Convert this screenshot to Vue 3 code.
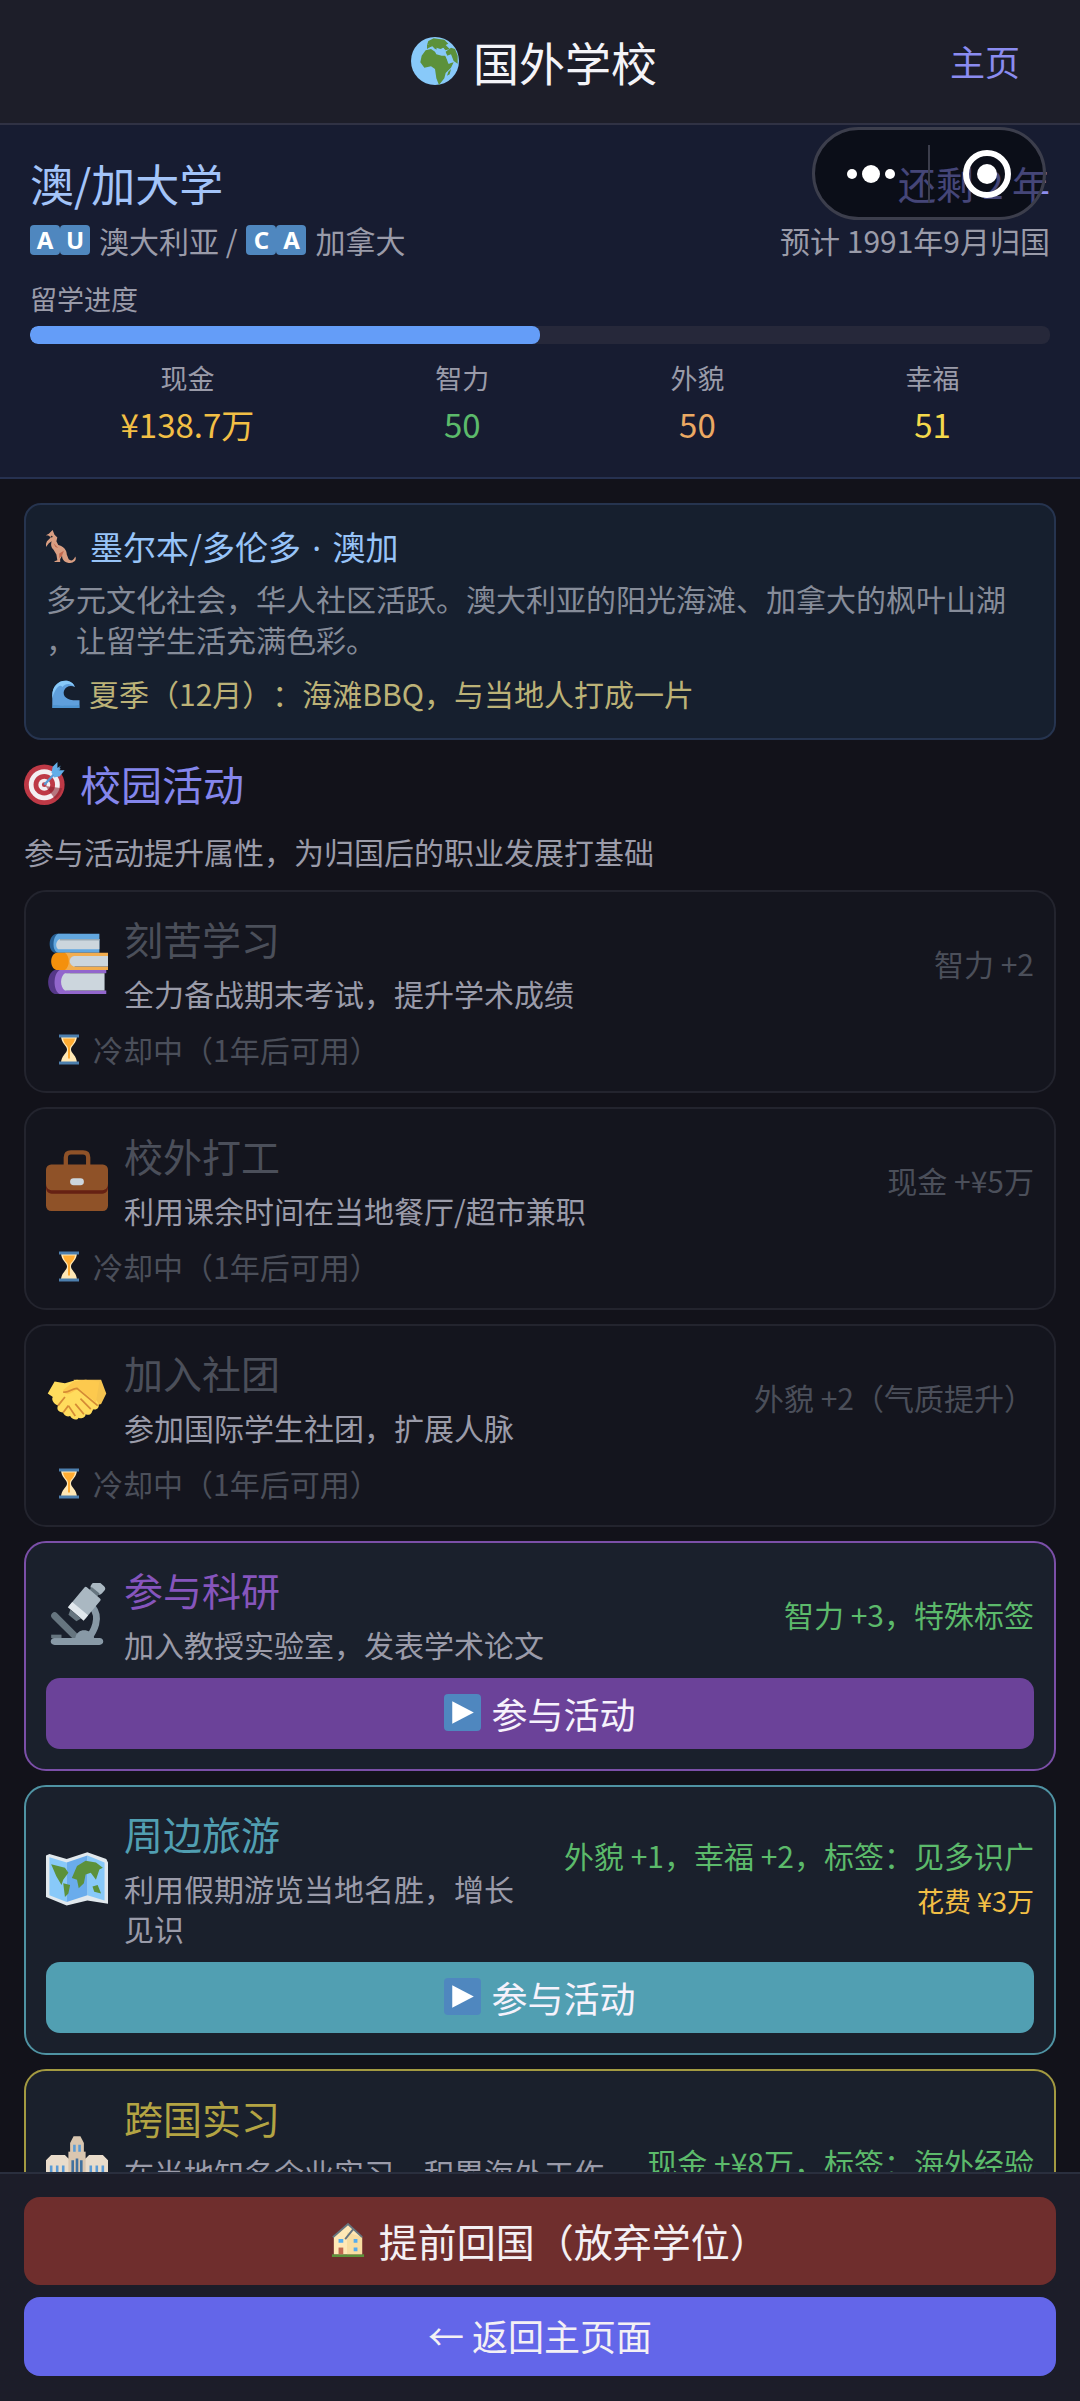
<template>
  <div class="page">
    <!-- 顶部导航 -->
    <header class="nav">
      <h1 class="nav-title">
        <svg class="icon icon-nav" viewBox="0 0 36 36" aria-hidden="true" v-html="icons.globe"></svg>
        国外学校
      </h1>
      <a class="nav-home" href="#">主页</a>
    </header>

    <!-- 小程序胶囊按钮 -->
    <div class="capsule">
      <button class="capsule-btn" type="button" aria-label="更多">
        <svg viewBox="0 0 54 54" aria-hidden="true">
          <circle cx="8" cy="27" r="5" />
          <circle cx="27" cy="27" r="9" />
          <circle cx="46" cy="27" r="5" />
        </svg>
      </button>
      <span class="capsule-line"></span>
      <button class="capsule-btn" type="button" aria-label="关闭">
        <svg viewBox="0 0 54 54" aria-hidden="true">
          <circle class="ring" cx="27" cy="27" r="21" />
          <circle cx="27" cy="27" r="10" />
        </svg>
      </button>
    </div>

    <!-- 留学状态 -->
    <section class="status">
      <div class="status-top">
        <span class="school-name">澳/加大学</span>
        <span class="remain">还剩 2 年</span>
      </div>
      <div class="status-sub">
        <span class="countries">
          <span class="flag"><i>A</i><i>U</i></span>
          澳大利亚 /
          <span class="flag"><i>C</i><i>A</i></span>
          加拿大
        </span>
        <span>预计 1991年9月归国</span>
      </div>
      <div class="progress-label">留学进度</div>
      <div class="progress-track">
        <div class="progress-fill" :style="{ width: progress + '%' }"></div>
      </div>
      <div class="stats">
        <div v-for="stat in stats" :key="stat.label" class="stat">
          <span class="stat-label">{{ stat.label }}</span>
          <span class="stat-value" :class="stat.type">{{ stat.value }}</span>
        </div>
      </div>
    </section>

    <main class="content">
      <!-- 地区介绍 -->
      <section class="region">
        <h2 class="region-title">
          <svg class="icon icon-region" viewBox="0 0 36 36" aria-hidden="true" v-html="icons.kangaroo"></svg>
          <span>墨尔本/多伦多 <span class="dot">·</span> 澳加</span>
        </h2>
        <p class="region-desc">多元文化社会，华人社区活跃。澳大利亚的阳光海滩、加拿大的枫叶山湖，让留学生活充满色彩。</p>
        <p class="region-season">
          <svg class="icon icon-season" viewBox="0 0 36 36" aria-hidden="true" v-html="icons.wave"></svg>
          夏季（12月）：海滩BBQ，与当地人打成一片
        </p>
      </section>

      <!-- 校园活动 -->
      <h2 class="section-title">
        <svg class="icon icon-section" viewBox="0 0 36 36" aria-hidden="true" v-html="icons.target"></svg>
        校园活动
      </h2>
      <p class="section-desc">参与活动提升属性，为归国后的职业发展打基础</p>

      <div class="activities">
        <article
          v-for="item in activities"
          :key="item.name"
          class="activity"
          :class="item.cooling ? 'cooling' : item.theme"
        >
          <div class="activity-head">
            <svg class="icon icon-activity" viewBox="0 0 36 36" aria-hidden="true" v-html="icons[item.icon]"></svg>
            <div class="activity-info">
              <h3 class="activity-name">{{ item.name }}</h3>
              <p class="activity-desc">{{ item.desc }}</p>
            </div>
            <div class="activity-effect">
              <span class="effect">{{ item.effect }}</span>
              <span v-if="item.cost" class="cost">花费 {{ item.cost }}</span>
            </div>
          </div>
          <div v-if="item.cooling" class="cooldown">
            <svg class="icon icon-cooldown" viewBox="0 0 20 30" aria-hidden="true" v-html="icons.hourglass"></svg>
            冷却中（{{ item.cooling }}年后可用）
          </div>
          <button v-else class="join-btn" type="button">
            <svg class="icon icon-play" viewBox="0 0 36 36" aria-hidden="true" v-html="icons.play"></svg>
            参与活动
          </button>
        </article>
      </div>
    </main>

    <!-- 底部操作 -->
    <footer class="footer">
      <button class="footer-btn danger" type="button">
        <svg class="icon icon-house" viewBox="0 0 36 36" aria-hidden="true" v-html="icons.house"></svg>
        <span>提前回国（放弃学位<span class="half">）</span></span>
      </button>
      <button class="footer-btn primary" type="button">← 返回主页面</button>
    </footer>
  </div>
</template>

<script setup>
const progress = 50

const stats = [
  { label: '现金', value: '¥138.7万', type: 'cash' },
  { label: '智力', value: 50, type: 'intel' },
  { label: '外貌', value: 50, type: 'looks' },
  { label: '幸福', value: 51, type: 'happy' }
]

const activities = [
  { name: '刻苦学习', desc: '全力备战期末考试，提升学术成绩', effect: '智力 +2', icon: 'books', cooling: 1 },
  { name: '校外打工', desc: '利用课余时间在当地餐厅/超市兼职', effect: '现金 +¥5万', icon: 'briefcase', cooling: 1 },
  { name: '加入社团', desc: '参加国际学生社团，扩展人脉', effect: '外貌 +2（气质提升）', icon: 'handshake', cooling: 1 },
  { name: '参与科研', desc: '加入教授实验室，发表学术论文', effect: '智力 +3，特殊标签', icon: 'microscope', theme: 'purple' },
  { name: '周边旅游', desc: '利用假期游览当地名胜，增长见识', effect: '外貌 +1，幸福 +2，标签：见多识广', cost: '¥3万', icon: 'map', theme: 'teal' },
  { name: '跨国实习', desc: '在当地知名企业实习，积累海外工作经验', effect: '现金 +¥8万，标签：海外经验', icon: 'building', theme: 'gold' }
]

const icons = {
  globe: `
    <circle cx="18" cy="18" r="18" fill="#88c9f9"/>
    <path fill="#5c913b" d="M13 3l4-2 8 1 3 3-2 1 3 3-3 1-2-2-2 2-4-1-2-2-3 1 1-3-2 1zM8 14l3-4 4-1 3 2 1 2 4 1 3 0 2 6 4-1-2 4-4 4-1 4-4 5-2-5-1-7-3-2-5 1-3-4z"/>
    <path fill="#5c913b" d="M26 11l4-3 3 1 2 5v6l-3-2-2-5-3 1zM28 26l2-2-1 4-2 1zM12 6l2-1 1 2-3 2zM18 7l3-1 1 2-3 1z"/>
    <path fill="#88c9f9" d="M19 8l3 1 3-1-1 2-4 1zM25 13l1-1 4 7-1 1z"/>`,
  kangaroo: `
    <path fill="#d99e82" d="M7 0l2 5 3 3-1 4 2 4c5 1 9 5 9 10l2 5c2 2 5 2 7-3 2 4-2 7-7 7-5-1-7-4-7-8l-2 4v3h-6v-1l3-1-1-6-3-5c-3-3-3-6-2-9l-3 2-3 4-1-1 2-5 4-4-2-2-4-1V6l4-2z"/>
    <path fill="#c1694f" d="M8 14l5 5-3-1zM14 25l5-3-2 5-3 3z"/>
    <circle cx="6" cy="7" r="1" fill="#292f33"/>`,
  wave: `
    <path fill="#5f9fdc" d="M1 36V20C1 9 8 1 18 1c6 0 10 3 12 8-5-3-12-1-14 5-2 7 4 13 20 12v10z"/>
    <path fill="#88c9f9" d="M1 20C1 9 8 1 18 1c6 0 10 3 12 8-5-5-12-5-16 0C10 3 3 14 1 24z"/>
    <path fill="#3b88c3" d="M1 33c5-2 9 1 14 0s10 1 21-1v4H1z" opacity=".5"/>`,
  target: `
    <circle cx="17" cy="19" r="17" fill="#be3946"/>
    <circle cx="17" cy="19" r="13" fill="#f3eff2"/>
    <circle cx="17" cy="19" r="9" fill="#be3946"/>
    <circle cx="17" cy="19" r="5" fill="#f3eff2"/>
    <circle cx="17" cy="19" r="2" fill="#be3946"/>
    <path fill="#8e2632" opacity=".6" d="M18 20l8 11c3-2 5-5 6-9z"/>
    <path stroke="#5a9bd5" stroke-width="2" d="M17 19L30 5"/>
    <path fill="#62aee8" d="M25 11l-2-2 1-5 4-4v5l3-2-3 4h6l-4 5-5 1z"/>`,
  books: `
    <path fill="#265f94" d="M6 1h8v11H5C1 11 1 2 6 1z"/>
    <path fill="#62a7df" d="M7 1h24v11H7C3 11 4 2 7 1z"/>
    <path fill="#ccd6dd" d="M8 4h23v6H7C5 8 6 5 8 4z"/>
    <path fill="#99aab5" d="M8 4h23v1H8z"/>
    <path fill="#f4900c" d="M6 12h8v10H6c-4-1-4-9 0-10z"/>
    <path fill="#f2ad4e" d="M11 12h25v2H17c-4 1-4 5 0 6h19v2H11c3-2 3-8 0-10z"/>
    <path fill="#ccd6dd" d="M16 14h20v6H16c-3-1-3-5 0-6z"/>
    <path fill="#553788" d="M5 22h9v14H5c-5-2-5-12 0-14z"/>
    <path fill="#9266cc" d="M8 22h27v2H12c-3 2-3 8 0 10h23v2H8c-4-2-4-12 0-14z"/>
    <path fill="#ccd6dd" d="M11 24h23v10H11c-3-2-3-8 0-10z"/>`,
  briefcase: `
    <path fill="none" stroke="#8f5228" stroke-width="2.5" d="M11.5 10V5c0-2 1-3 3-3h7c2 0 3 1 3 3v5"/>
    <rect y="9" width="36" height="27" rx="3" fill="#8f5228"/>
    <path fill="#662113" d="M0 20c0 3 2 4 4 4h28c2 0 4-1 4-4v2c0 3-2 4-4 4H4c-2 0-4-1-4-4z"/>
    <rect x="14" y="17" width="8" height="4" rx="2" fill="#ccd6dd"/>`,
  handshake: `
    <path fill="#f5c34f" d="M16 8h8l8 0 3 8-3 6-3 1-2 3-5-2z"/>
    <path fill="#ffdc5d" d="M1 16l4-7 6 1 7-2 4 1 8 12c2 3-1 5-3 4 0 3-2 4-4 3 0 2-3 3-4 2-1 2-4 1-5-1-2 1-4-1-4-2-3 0-4-2-3-4-3-1-4-4-3-5z"/>
    <path fill="#fdc94e" d="M10 14l6-5 7-1 8 1-2 12-10-8-5 3c-2 1-4 0-4-2z"/>
    <path fill="none" stroke="#d58b35" d="M10 15c3 1 5-2 8-2l12 10M20 19l6 6M17 22l5 6M13 23l4 6M7 23l4-5M10 27l3-4"/>`,
  microscope: `
    <path fill="none" stroke="#8899a6" stroke-width="4" d="M27 14c5 6 1 14-3 19"/>
    <path stroke="#66757f" stroke-width="4" stroke-linecap="round" d="M5 19l12 12"/>
    <path fill="#8899a6" d="M5 32h12c1-6 9-6 11 0h3c3 0 3 4 0 4H5c-3 0-3-4 0-4z"/>
    <path fill="#66757f" d="M3 30h6v2H3z"/>
    <g transform="rotate(40 21 12)">
      <rect x="18" y="-4" width="8" height="6" rx="2" fill="#aab8c2"/>
      <path fill="#66757f" d="M19 1h6v3h-6z"/>
      <rect x="16" y="3" width="12" height="15" rx="1" fill="#aab8c2"/>
      <path fill="#e1e8ed" d="M16 15h12v4H16z"/>
      <path fill="#66757f" d="M18 19h8l-1 3h-6z"/>
    </g>`,
  map: `
    <path fill="#e1e8ed" d="M0 5l2-1 10 3 12-4 11 4 1 2v24l-12-2-12 3-12-5z"/>
    <path fill="#88c9f9" d="M2 6l10 3v23L2 28zM24 5l10 4v22l-10-3z"/>
    <path fill="#6aacec" d="M12 9l12-4v23l-12 4z"/>
    <path fill="#5c913b" d="M3 10l8 2 2 3-3 4-1 3-3-5zM10 21l4 1-1 5-2 2zM18 11l5-3 6 1 4 3-2 1-2 6-3-4-3 1-1 5-3 3-1-5-3-1zM27 23l3-1 2 5-4-1z"/>`,
  building: `
    <path fill="#d9c6b0" d="M16 3h4l2 4v6h-8V7z"/>
    <path fill="#e9dccb" d="M0 17l3-3h8l2 2h10l2-2h8l3 3v19H0z"/>
    <path fill="#d9c6b0" d="M13 12h10v24H13z"/>
    <path stroke="#5b9bd5" stroke-width="1.5" d="M3 20v16M6.5 20v16M10 20v16M26 20v16M29.500 20v16M33 20v16M16.500 8v4M19.500 8v4"/>
    <path stroke="#41719f" stroke-width="1.500" d="M15.500 17v19M18 16v20M20.500 17v19"/>`,
  hourglass: `
    <path fill="#ffe8b6" d="M2 1h16c0 8-6 10-6 14s6 6 6 14H2c0-8 6-10 6-14S2 9 2 1z"/>
    <path fill="#ffac33" d="M4 4h12c-1 6-5 7-5 10v10H9V14C9 11 5 10 4 4z"/>
    <path fill="#4c7fae" d="M0 0h20v3H0zM0 27h20v3H0z"/>`,
  play: `
    <rect width="36" height="36" rx="4" fill="#4f87bf"/>
    <path fill="#fff" d="M8 7l21 11L8 29z"/>`,
  house: `
    <path fill="#5c913b" d="M1 33h34v3H1z"/>
    <path fill="#ffe8b6" d="M3 14L18 1l15 14v18H3z"/>
    <path fill="#f2d28c" d="M17 10h1l15 5v18H17z" opacity=".5"/>
    <path fill="none" stroke="#66757f" stroke-width="2" d="M2 15L18 1l15 14M24 6l-9 11"/>
    <path fill="#55acee" d="M8 17h5v4H8zM24 17h4v4h-4zM24 26h4v4h-4z"/>
    <path fill="#c1694f" d="M8 26h5v7H8z"/>`
}
</script>

<style>
body {
  background: #12121a;
}
</style>

<style scoped>
.page {
  position: relative;
  display: flex;
  flex-direction: column;
  height: 100vh;
  background: #12121a;
  color: #f4f4f8;
  font-family: "Noto Sans CJK SC", sans-serif;
  font-weight: 400;
  text-spacing-trim: space-all;
}

h1,
h2,
h3,
p {
  margin: 0;
  font-weight: inherit;
}

button {
  border: none;
  font-family: inherit;
  font-weight: inherit;
  cursor: pointer;
}

.icon {
  display: block;
  flex-shrink: 0;
}

/* 顶部导航 */
.nav {
  display: grid;
  grid-template-columns: 1fr auto 1fr;
  align-items: center;
  height: 121px;
  padding: 0 60px 2px 48px;
  background: #1d1e29;
  border-bottom: 2px solid #303244;
}

.nav-title {
  display: flex;
  align-items: center;
  gap: 14px;
  grid-column: 2;
  font-size: 46px;
}

.icon-nav {
  width: 48px;
  height: 48px;
}

.nav-home {
  justify-self: end;
  color: #8b8cf0;
  font-size: 35px;
  text-decoration: none;
}

/* 胶囊 */
.capsule {
  position: absolute;
  top: 127px;
  right: 34px;
  z-index: 5;
  display: flex;
  align-items: center;
  justify-content: space-between;
  box-sizing: border-box;
  width: 234px;
  height: 93px;
  padding: 0 29px;
  background: rgba(0, 0, 0, 0.5);
  border: 3px solid #3c3e4c;
  border-radius: 47px;
}

.capsule-btn {
  width: 54px;
  height: 54px;
  padding: 0;
  background: none;
}

.capsule-btn svg {
  display: block;
  fill: #fff;
}

.capsule-btn .ring {
  fill: none;
  stroke: #fff;
  stroke-width: 6;
}

.capsule-line {
  width: 2px;
  height: 58px;
  background: #3c3e4c;
}

/* 留学状态 */
.status {
  padding: 28px 30px 30px;
  background: #171c31;
  border-bottom: 2px solid #263150;
}

.status-top,
.status-sub {
  display: flex;
  align-items: center;
  justify-content: space-between;
}

.status-top {
  line-height: 60px;
}

.school-name {
  color: #a3c4f9;
  font-size: 44px;
}

.remain {
  color: #8b8cf0;
  font-size: 38px;
}

.status-sub {
  margin-top: 6px;
  color: #9a9ba9;
  font-size: 30px;
  line-height: 42px;
}

.countries {
  display: flex;
  align-items: center;
  gap: 9px;
}

.flag {
  display: flex;
}

.flag i {
  width: 30px;
  border-radius: 4px;
  background: #4f87bf;
  color: #fff;
  font-family: "Noto Sans", sans-serif;
  font-size: 24px;
  font-style: normal;
  font-weight: 700;
  line-height: 30px;
  text-align: center;
}

.progress-label {
  margin-top: 19px;
  color: #9a9ba9;
  font-size: 27px;
  line-height: 38px;
}

.progress-track {
  height: 18px;
  margin-top: 8px;
  overflow: hidden;
  background: #26283a;
  border-radius: 8px;
}

.progress-fill {
  height: 100%;
  background: #649df8;
  border-radius: 8px;
}

.stats {
  display: flex;
  justify-content: space-around;
  margin-top: 15px;
}

.stat {
  display: flex;
  flex-direction: column;
  align-items: center;
  gap: 4px;
}

.stat-label {
  color: #9a9ba9;
  font-size: 27px;
  line-height: 38px;
}

.stat-value {
  font-size: 33px;
  line-height: 46px;
}

.cash,
.cost {
  color: #f2bf45;
}

.intel {
  color: #5cba6b;
}

.looks {
  color: #eba963;
}

.happy {
  color: #f5d94c;
}

/* 内容区 */
.content {
  flex: 1;
  min-height: 0;
  padding: 24px 24px 0;
  overflow: auto;
  scrollbar-width: none;
}

.region {
  padding: 18px 20px 24px;
  background: #161f2e;
  border: 2px solid #26344f;
  border-radius: 17px;
}

.region-title,
.region-season {
  display: flex;
  align-items: center;
}

.region-title {
  gap: 10px;
  color: #98c4f8;
  font-size: 33px;
  line-height: 46px;
}

.dot {
  margin: 0 4px;
  font-family: "Noto Sans", sans-serif;
}

.icon-region {
  width: 34px;
  height: 34px;
}

.region-desc {
  margin-top: 7px;
  color: #868c99;
  font-size: 30px;
  line-height: 41px;
  line-break: anywhere;
}

.region-season {
  gap: 8px;
  margin-top: 13px;
  padding-left: 4px;
  color: #bcb277;
  font-size: 30px;
  line-height: 41px;
}

.icon-season {
  width: 31px;
  height: 28px;
}

.section-title {
  display: flex;
  align-items: center;
  gap: 13px;
  margin-top: 13px;
  color: #8486ec;
  font-size: 41px;
  line-height: 60px;
}

.icon-section {
  width: 43px;
  height: 43px;
}

.section-desc {
  margin-top: 18px;
  color: #9a9ba9;
  font-size: 30px;
  line-height: 40px;
}

/* 活动卡片 */
.activities {
  display: flex;
  flex-direction: column;
  gap: 14px;
  margin-top: 19px;
}

.activity {
  padding: 20px;
  background: #1a202c;
  border: 2px solid;
  border-radius: 22px;
}

.activity-head {
  display: flex;
  align-items: center;
  gap: 16px;
}

.icon-activity {
  width: 62px;
  height: 62px;
}

.activity-info {
  flex: 1;
}

.activity-name {
  font-size: 39px;
  line-height: 53px;
}

.activity-desc {
  margin-top: 8px;
  color: #9a9ba9;
  font-size: 30px;
  line-height: 40px;
}

.activity-effect {
  display: flex;
  flex-direction: column;
  align-items: flex-end;
  gap: 6px;
  margin-left: 8px;
  white-space: nowrap;
}

.effect {
  color: #5cba6b;
  font-size: 30px;
  line-height: 40px;
}

.cost {
  font-size: 27px;
  line-height: 40px;
}

.cooldown {
  display: flex;
  align-items: center;
  gap: 14px;
  margin-top: 14px;
  padding-left: 13px;
  color: #4b4f5a;
  font-size: 30px;
  line-height: 44px;
}

.icon-cooldown {
  width: 20px;
  height: 31px;
}

.join-btn {
  display: flex;
  align-items: center;
  justify-content: center;
  gap: 10px;
  width: 100%;
  height: 71px;
  margin-top: 14px;
  padding-bottom: 3px;
  border-radius: 14px;
  color: #f6f2fc;
  font-size: 36px;
}

.icon-play {
  width: 37px;
  height: 37px;
}

.cooling {
  background: #14151e;
  border-color: #23242e;
}

.cooling .activity-name,
.cooling .effect {
  color: #4b4f5a;
}

.purple {
  border-color: #7b4fa8;
}

.purple .activity-name {
  color: #8655bd;
}

.purple .join-btn {
  background: #6b4299;
}

.teal {
  border-color: #4f93a3;
}

.teal .activity-name {
  color: #519fb2;
}

.teal .join-btn {
  background: #519fb2;
}

.gold {
  border-color: #a39a41;
}

.gold .activity-name {
  color: #b3a443;
}

.gold .join-btn {
  background: #b3a443;
}

/* 底部操作 */
.footer {
  display: flex;
  flex-direction: column;
  gap: 12px;
  padding: 23px 24px 25px;
  background: #1c1d29;
  border-top: 2px solid #2a2f3e;
}

.footer-btn {
  display: flex;
  align-items: center;
  justify-content: center;
  padding-bottom: 4px;
  border-radius: 16px;
  color: #f4f0f4;
}

.danger {
  gap: 14px;
  height: 88px;
  background: #6f2e2d;
  font-size: 39px;
}

.half {
  font-feature-settings: "halt";
}

.primary {
  height: 79px;
  background: #6366e9;
  font-size: 36px;
}

.icon-house {
  width: 34px;
  height: 36px;
}
</style>
